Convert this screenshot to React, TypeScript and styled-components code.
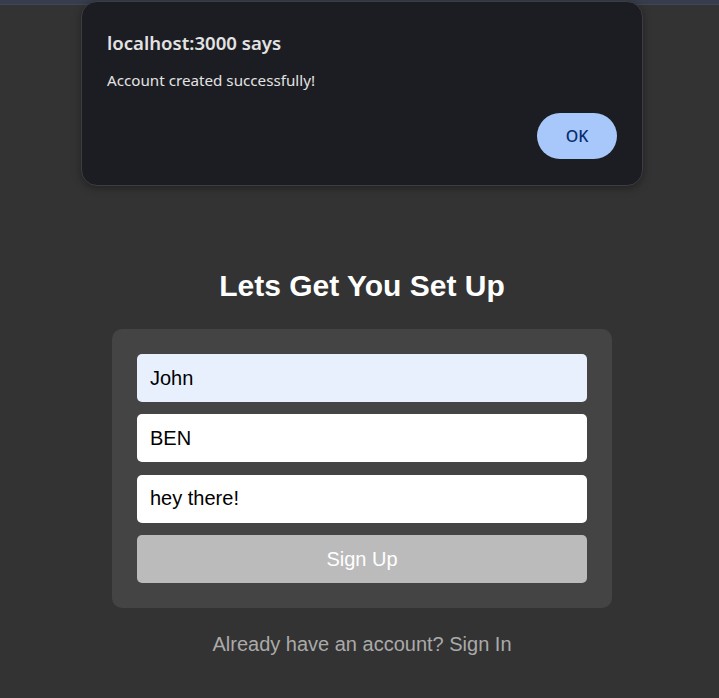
import React from "react";
import styled, { createGlobalStyle } from "styled-components";

const GlobalStyle = createGlobalStyle`
  html, body {
    margin: 0;
    padding: 0;
    background: #333333;
  }
  * { box-sizing: border-box; }
`;

const Page = styled.div`
  position: relative;
  min-height: 698px;
  background: #333333;
  font-family: "Liberation Sans", Arial, sans-serif;
`;

const TopStrip = styled.div`
  height: 5px;
  background: #373d4c;
  border-bottom: 1px solid #3f4657;
`;

const Main = styled.main`
  display: flex;
  flex-direction: column;
  align-items: center;
  padding-top: 264px;
  padding-left: 5px;
`;

const Heading = styled.h1`
  margin: 0 0 26px;
  font-size: 30px;
  line-height: 34px;
  font-weight: 700;
  color: #ffffff;
`;

const Card = styled.form`
  width: 500px;
  padding: 25px;
  background: #444444;
  border-radius: 10px;
  display: flex;
  flex-direction: column;
  gap: 12.3px;
`;

const Field = styled.input<{ $autofill?: boolean }>`
  height: 48px;
  width: 100%;
  border: none;
  border-radius: 5px;
  padding: 0 13px;
  font-family: "Liberation Sans", Arial, sans-serif;
  font-size: 20px;
  color: #000000;
  background: ${(p) => (p.$autofill ? "#e8f0fe" : "#ffffff")};
  outline: none;
`;

const SubmitButton = styled.button`
  height: 48px;
  width: 100%;
  border: none;
  border-radius: 5px;
  background: #bbbbbb;
  color: #ffffff;
  font-family: "Liberation Sans", Arial, sans-serif;
  font-size: 20px;
  padding-top: 2px;
  cursor: pointer;
`;

const Footer = styled.p`
  margin: 25px 0 0;
  font-size: 20px;
  line-height: 23px;
  color: #aaaaaa;
`;

const Dialog = styled.div`
  position: absolute;
  top: 1px;
  left: 81px;
  width: 562px;
  height: 185px;
  background: #1c1d22;
  border: 1px solid #3c3d42;
  border-radius: 16px;
  box-shadow: 0 2px 8px rgba(0, 0, 0, 0.35);
  padding: 28px 25px 26px 25px;
  display: flex;
  flex-direction: column;
  font-family: "Noto Sans", "Open Sans", sans-serif;
`;

const DialogTitle = styled.div`
  font-size: 18.6px;
  line-height: 26px;
  font-weight: 600;
  color: #e3e3e3;
`;

const DialogMessage = styled.div`
  margin-top: 14px;
  font-size: 15.2px;
  line-height: 20px;
  color: #e3e3e3;
`;

const DialogActions = styled.div`
  margin-top: auto;
  display: flex;
  justify-content: flex-end;
`;

const OkButton = styled.button`
  width: 80px;
  height: 46px;
  border: none;
  border-radius: 23px;
  background: #a8c7fa;
  color: #062e6f;
  font-family: "Noto Sans", "Open Sans", sans-serif;
  font-size: 16px;
  font-weight: 500;
  cursor: pointer;
`;

export default function App() {
  return (
    <Page>
      <GlobalStyle />
      <TopStrip />
      <Main>
        <Heading>Lets Get You Set Up</Heading>
        <Card onSubmit={(e) => e.preventDefault()}>
          <Field $autofill defaultValue="John" />
          <Field defaultValue="BEN" />
          <Field defaultValue="hey there!" />
          <SubmitButton type="submit">Sign Up</SubmitButton>
        </Card>
        <Footer>Already have an account? Sign In</Footer>
      </Main>
      <Dialog role="alertdialog">
        <DialogTitle>localhost:3000 says</DialogTitle>
        <DialogMessage>Account created successfully!</DialogMessage>
        <DialogActions>
          <OkButton>OK</OkButton>
        </DialogActions>
      </Dialog>
    </Page>
  );
}
